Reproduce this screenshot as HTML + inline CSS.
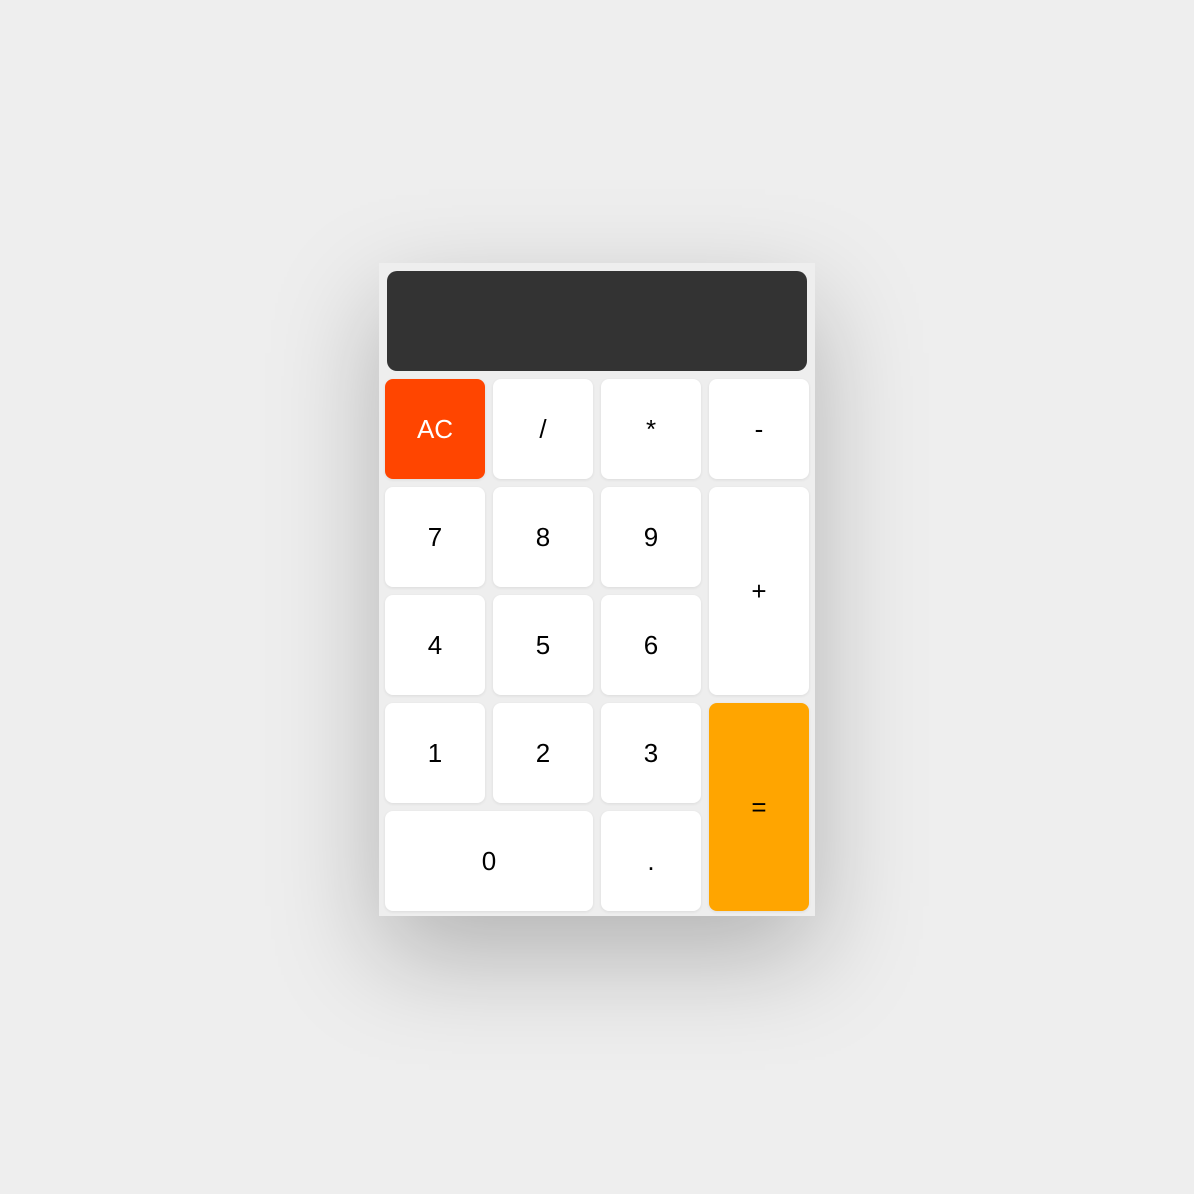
<!DOCTYPE html>
<html><head><style>
html,body{margin:0;padding:0;}
body{width:1194px;height:1194px;background:#eeeeee;position:relative;overflow:hidden;font-family:"Liberation Sans",Arial,sans-serif;}
.calc{position:absolute;left:379px;top:263px;width:436px;height:653px;background:#eeeeee;box-shadow:0 40px 100px rgba(0,0,0,0.25);}
.disp{position:absolute;left:8px;top:8px;width:420px;height:100px;background:#333;border-radius:10px;}
.b{position:absolute;width:100px;height:100px;background:#fff;border-radius:8px;box-shadow:0 1px 3px rgba(0,0,0,0.08);display:flex;align-items:center;justify-content:center;font-size:26px;color:#000;}
</style></head><body>
<div class="calc">
<div class="disp"></div>
<div class="b" style="left:6px;top:116px;background:#ff4500;color:#fff">AC</div>
<div class="b" style="left:114px;top:116px">/</div>
<div class="b" style="left:222px;top:116px">*</div>
<div class="b" style="left:330px;top:116px">-</div>
<div class="b" style="left:6px;top:224px">7</div>
<div class="b" style="left:114px;top:224px">8</div>
<div class="b" style="left:222px;top:224px">9</div>
<div class="b" style="left:330px;top:224px;height:208px">+</div>
<div class="b" style="left:6px;top:332px">4</div>
<div class="b" style="left:114px;top:332px">5</div>
<div class="b" style="left:222px;top:332px">6</div>
<div class="b" style="left:6px;top:440px">1</div>
<div class="b" style="left:114px;top:440px">2</div>
<div class="b" style="left:222px;top:440px">3</div>
<div class="b" style="left:330px;top:440px;height:208px;background:#ffa500">=</div>
<div class="b" style="left:6px;top:548px;width:208px">0</div>
<div class="b" style="left:222px;top:548px">.</div>
</div>
</body></html>
